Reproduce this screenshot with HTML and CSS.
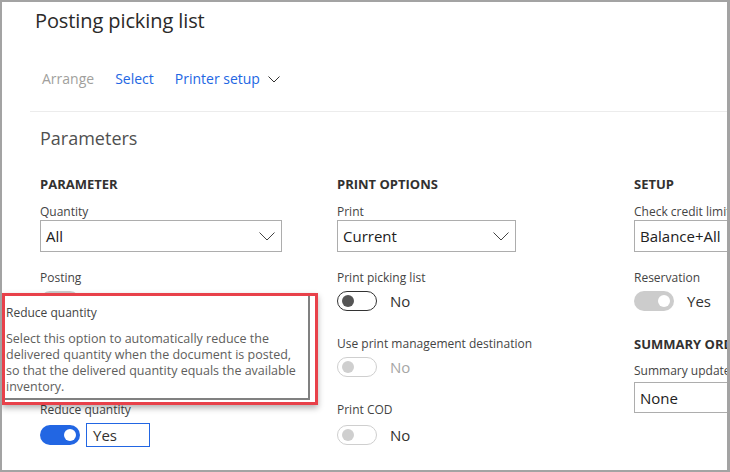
FILE: index.html
```html
<!DOCTYPE html>
<html lang="en">
<head>
<meta charset="utf-8">
<title>Posting picking list</title>
<link rel="stylesheet" href="styles.css">
</head>
<body>
<div class="frame">
  <h1 class="title">Posting picking list</h1>
  <nav class="toolbar">
    <span class="tb tb-disabled">Arrange</span>
    <span class="tb tb-link">Select</span>
    <span class="tb tb-link">Printer setup
      <svg class="tb-chev" width="12" height="7" viewBox="0 0 12 7"><path d="M0.5 0.5 L6 6 L11.5 0.5" fill="none" stroke="#323130" stroke-width="1"/></svg>
    </span>
  </nav>
  <section class="panel">
    <h2 class="panel-title">Parameters</h2>
    <div class="cols">
      <div class="col">
        <h3 class="group-title">PARAMETER</h3>
        <div class="field">
          <span class="label">Quantity</span>
          <div class="select sel-wide"><span>All</span>
            <svg width="16" height="9" viewBox="0 0 16 9"><path d="M0.5 0.5 L8 8 L15.5 0.5" fill="none" stroke="#444" stroke-width="1"/></svg>
          </div>
        </div>
        <div class="field">
          <span class="label">Posting</span>
          <div class="toggle-row"><span class="toggle on-disabled"><span class="knob"></span></span></div>
        </div>
        <div class="field"></div>
        <div class="field">
          <span class="label">Reduce quantity</span>
          <div class="toggle-row tight"><span class="toggle on"><span class="knob"></span></span><span class="value-box">Yes</span></div>
        </div>
      </div>
      <div class="col">
        <h3 class="group-title">PRINT OPTIONS</h3>
        <div class="field">
          <span class="label">Print</span>
          <div class="select sel-mid"><span>Current</span>
            <svg width="16" height="9" viewBox="0 0 16 9"><path d="M0.5 0.5 L8 8 L15.5 0.5" fill="none" stroke="#444" stroke-width="1"/></svg>
          </div>
        </div>
        <div class="field">
          <span class="label">Print picking list</span>
          <div class="toggle-row"><span class="toggle off"><span class="knob"></span></span><span class="tval">No</span></div>
        </div>
        <div class="field">
          <span class="label">Use print management destination</span>
          <div class="toggle-row"><span class="toggle off-disabled"><span class="knob"></span></span><span class="tval muted">No</span></div>
        </div>
        <div class="field">
          <span class="label">Print COD</span>
          <div class="toggle-row low"><span class="toggle off-disabled"><span class="knob"></span></span><span class="tval">No</span></div>
        </div>
      </div>
      <div class="col">
        <h3 class="group-title">SETUP</h3>
        <div class="field">
          <span class="label">Check credit limit</span>
          <div class="select sel-wide"><span>Balance+All</span></div>
        </div>
        <div class="field">
          <span class="label">Reservation</span>
          <div class="toggle-row"><span class="toggle on-disabled"><span class="knob"></span></span><span class="tval">Yes</span></div>
        </div>
        <h3 class="group-title sub">SUMMARY ORDER</h3>
        <span class="label sub-label">Summary update for</span>
        <div class="select sel-wide sel-short"><span>None</span></div>
      </div>
    </div>
  </section>

  <div class="tooltip">
    <div class="tip-title">Reduce quantity</div>
    <p class="tip-text">Select this option to automatically reduce the delivered quantity when the document is posted, so that the delivered quantity equals the available inventory.</p>
  </div>
  <div class="annot"></div>
</div>
</body>
</html>
```
FILE: styles.css
```css
html, body { margin: 0; padding: 0; }
body {
  width: 730px;
  height: 472px;
  overflow: hidden;
  background: #fff;
  font-family: "Open Sans", "Noto Sans", sans-serif;
}
.frame {
  position: relative;
  box-sizing: border-box;
  width: 730px;
  height: 472px;
  border: 2px solid #a3a3a3;
  border-right-width: 3px;
  overflow: hidden;
  background: #fff;
}
.title {
  margin: 5px 0 0 33px;
  font-size: 20px;
  line-height: 28px;
  font-weight: 400;
  color: #2b2a29;
  letter-spacing: -0.1px;
}
.toolbar {
  display: flex;
  align-items: center;
  gap: 21px;
  margin: 34px 0 0 40px;
  height: 20px;
  font-size: 14px;
  line-height: 20px;
}
.tb-disabled { color: #a19f9d; }
.tb-link { color: #2266e3; display: flex; align-items: center; gap: 8px; }
.tb-chev { margin-top: 1px; }
.panel {
  margin: 22px 0 0 28px;
  border-top: 1px solid #ececec;
  padding-left: 10px;
}
.panel-title {
  margin: 14px 0 0 0;
  font-size: 18px;
  line-height: 24px;
  font-weight: 400;
  color: #505050;
}
.cols {
  display: grid;
  grid-template-columns: 297px 297px 297px;
  margin-top: 25px;
}
.group-title {
  margin: 0 0 10px 0;
  font-size: 13px;
  line-height: 18px;
  font-weight: 700;
  color: #323130;
}
.group-title.sub { margin-bottom: 9px; }
.field { height: 66px; }
.label {
  display: block;
  font-size: 12px;
  line-height: 17px;
  color: #444;
}
.select {
  box-sizing: border-box;
  height: 32px;
  border: 1px solid #adadad;
  display: flex;
  align-items: center;
  justify-content: space-between;
  padding: 0 6px 0 5px;
  font-size: 15px;
  color: #212121;
}
.sel-wide { width: 242px; }
.sel-mid { width: 179px; }
.sel-short { height: 31px; margin-top: 3px; }
.toggle-row {
  display: flex;
  align-items: center;
  gap: 13px;
  height: 22px;
  margin-top: 4px;
  font-size: 15px;
  color: #323130;
}
.toggle-row.low { margin-top: 6px; }
.toggle-row.tight { gap: 6px; height: 24px; margin-top: 5px; }
.toggle {
  box-sizing: border-box;
  width: 40px;
  height: 20px;
  border-radius: 10px;
  display: flex;
  align-items: center;
  padding: 0 4px;
}
.knob {
  width: 12px;
  height: 12px;
  border-radius: 50%;
}
.toggle.off { border: 1px solid #333; background: #fff; }
.toggle.off .knob { background: #555; }
.toggle.off-disabled { border: 1px solid #cfcfcf; background: #fff; }
.toggle.off-disabled .knob { background: #cfcfcf; }
.toggle.on-disabled { background: #cccccc; justify-content: flex-end; }
.toggle.on-disabled .knob { background: #fff; }
.toggle.on { background: #2266e3; justify-content: flex-end; }
.toggle.on .knob { background: #fff; }
.tval.muted { color: #a6a6a6; }
.value-box {
  box-sizing: border-box;
  width: 64px;
  height: 24px;
  border: 1px solid #2266e3;
  padding-left: 6px;
  line-height: 22px;
  font-size: 15px;
  color: #323130;
}
.tooltip {
  position: absolute;
  left: -12px;
  top: 292px;
  width: 320px;
  height: 106px;
  box-sizing: border-box;
  border: 2px solid #808080;
  background: #fff;
  padding: 9px 8px 0 14px;
}
.tip-title {
  font-size: 12px;
  line-height: 16px;
  color: #444;
  margin-bottom: 10px;
}
.tip-text {
  margin: 0;
  width: 294px;
  font-size: 12.5px;
  line-height: 16px;
  color: #605e5c;
}
.annot {
  position: absolute;
  left: 0;
  top: 291px;
  width: 316px;
  height: 112px;
  box-sizing: border-box;
  border: 3px solid #e8414a;
  box-shadow: 0 3px 6px rgba(0, 0, 0, 0.3);
}
```
